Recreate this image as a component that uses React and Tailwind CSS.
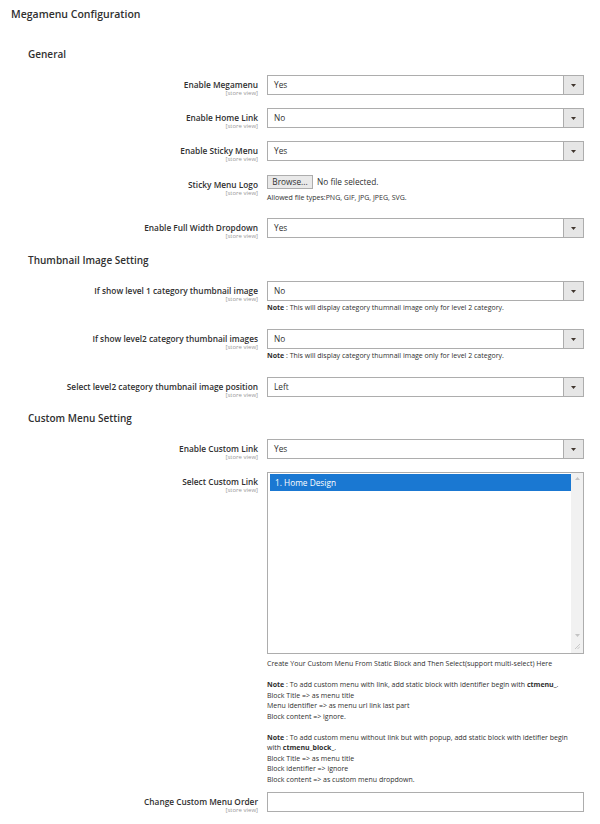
import { useState } from "react";

const FONT = { fontFamily: '"Open Sans", "Liberation Sans", sans-serif' };

function Arrow() {
  return (
    <div className="flex w-[20px] items-center justify-center border-l border-[#adadad] bg-[#e6e6e6]">
      <svg width="5" height="3" viewBox="0 0 5 3">
        <path d="M0 0 L5 0 L2.5 3 Z" fill="#41362f" />
      </svg>
    </div>
  );
}

function Select({ value }) {
  return (
    <div className="flex h-[20px] border border-[#adadad] bg-white">
      <div className="flex-1 pl-[6px] text-[8.3px] leading-[18px] text-[#303030]">{value}</div>
      <Arrow />
    </div>
  );
}

function Label({ text }) {
  return (
    <div className="pt-[4px] text-right">
      <div className="text-[8.3px] font-semibold leading-[11px] text-[#303030]">{text}</div>
      <div className="text-[6px] leading-[7px] text-[#999]">[store view]</div>
    </div>
  );
}

function Row({ label, h, children }) {
  return (
    <div className={`grid grid-cols-[258px_317px] gap-x-[9px] ${h}`}>
      <Label text={label} />
      <div>{children}</div>
    </div>
  );
}

function Note() {
  return (
    <div className="mt-[2px] text-[7px] leading-[9px] text-[#303030]">
      <span className="font-bold">Note</span> : This will display category thumnail image only for level 2 category.
    </div>
  );
}

function Heading({ children, h }) {
  return (
    <div className={`pl-[28px] text-[10px] font-semibold leading-[14px] text-[#303030] ${h}`}>
      {children}
    </div>
  );
}

export default function App() {
  const [selected] = useState("1. Home Design");

  return (
    <div className="min-h-[824px] w-[600px] bg-white pt-[7px]" style={FONT}>
      <div className="pl-[11px] text-[10.5px] font-semibold leading-[14px] text-[#303030]">
        Megamenu Configuration
      </div>

      <Heading h="mt-[26px] h-[28px]">General</Heading>

      <Row label="Enable Megamenu" h="h-[33px]">
        <Select value="Yes" />
      </Row>
      <Row label="Enable Home Link" h="h-[33px]">
        <Select value="No" />
      </Row>
      <Row label="Enable Sticky Menu" h="h-[34px]">
        <Select value="Yes" />
      </Row>
      <Row label="Sticky Menu Logo" h="h-[43px]">
        <div className="flex items-center">
          <div className="h-[14px] w-[46px] border border-[#adadad] bg-[#e9e9e9] text-center text-[8.3px] leading-[12px] text-[#303030]">
            Browse...
          </div>
          <div className="pl-[4px] text-[8.3px] leading-[14px] text-[#303030]">No file selected.</div>
        </div>
        <div className="mt-[4px] text-[7px] leading-[9px] text-[#303030]">
          Allowed file types:PNG, GIF, JPG, JPEG, SVG.
        </div>
      </Row>
      <Row label="Enable Full Width Dropdown" h="h-[35px]">
        <Select value="Yes" />
      </Row>

      <Heading h="h-[28px]">Thumbnail Image Setting</Heading>

      <Row label="If show level 1 category thumbnail image" h="h-[48px]">
        <Select value="No" />
        <Note />
      </Row>
      <Row label="If show level2 category thumbnail images" h="h-[48px]">
        <Select value="No" />
        <Note />
      </Row>
      <Row label="Select level2 category thumbnail image position" h="h-[34px]">
        <Select value="Left" />
      </Row>

      <Heading h="h-[28px]">Custom Menu Setting</Heading>

      <Row label="Enable Custom Link" h="h-[33px]">
        <Select value="Yes" />
      </Row>
      <Row label="Select Custom Link" h="h-[320px]">
        <div className="flex h-[182px] border border-[#adadad] bg-white">
          <div className="flex-1 pl-[2px] pt-[1px]">
            <div className="h-[17px] bg-[#1a78d2] pl-[5px] text-[8.3px] leading-[17px] text-white">{selected}</div>
          </div>
          <div className="flex w-[12px] flex-col items-center justify-between bg-[#f1f1f1] py-[4px]">
            <svg width="5" height="3" viewBox="0 0 5 3">
              <path d="M0 3 L2.5 0 L5 3 Z" fill="#c4c4c4" />
            </svg>
            <div className="flex flex-col items-center gap-[6px]">
              <svg width="5" height="3" viewBox="0 0 5 3">
                <path d="M0 0 L5 0 L2.5 3 Z" fill="#c4c4c4" />
              </svg>
              <svg width="6" height="6" viewBox="0 0 6 6">
                <path d="M6 1 L1 6 M6 3.5 L3.5 6" stroke="#bdbdbd" strokeWidth="0.8" />
              </svg>
            </div>
          </div>
        </div>
        <div className="mt-[5px] text-[7px] leading-[10.5px] text-[#303030]">
          <div>Create Your Custom Menu From Static Block and Then Select(support multi-select) Here</div>
          <div className="h-[10.5px]" />
          <div>
            <span className="font-bold">Note</span> : To add custom menu with link, add static block with identifier begin with <span className="font-bold">ctmenu_</span>.
          </div>
          <div>Block Title =&gt; as menu title</div>
          <div>Menu identifier =&gt; as menu url link last part</div>
          <div>Block content =&gt; ignore.</div>
          <div className="h-[10.5px]" />
          <div className="whitespace-nowrap">
            <span className="font-bold">Note</span> : To add custom menu without link but with popup, add static block with idetifier begin
          </div>
          <div>
            with <span className="font-bold">ctmenu_block_</span>.
          </div>
          <div>Block Title =&gt; as menu title</div>
          <div>Block identifier =&gt; ignore</div>
          <div>Block content =&gt; as custom menu dropdown.</div>
        </div>
      </Row>
      <Row label="Change Custom Menu Order" h="h-[30px]">
        <div className="h-[20px] border border-[#adadad] bg-white" />
      </Row>
    </div>
  );
}
